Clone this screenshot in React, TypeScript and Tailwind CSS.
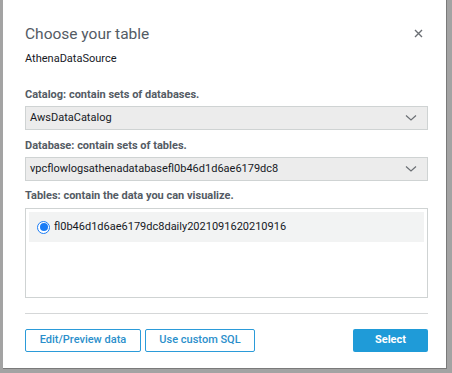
import { FC } from "react";

const Chevron: FC = () => (
  <svg width="12" height="8" viewBox="0 0 12 8" fill="none">
    <path d="M1 1.5L6 6L11 1.5" stroke="#6b6f74" strokeWidth="1.2" />
  </svg>
);

const SelectBox: FC<{ value: string }> = ({ value }) => (
  <div className="flex h-[24px] w-[403px] items-center justify-between border border-[#cfd3d3] bg-[#ececec] pl-[4px] pr-[10px] text-[11px] text-[#16191f]">
    <span>{value}</span>
    <Chevron />
  </div>
);

const Label: FC<{ text: string }> = ({ text }) => (
  <div className="text-[11px] font-bold leading-[16px] text-[#545b64]">{text}</div>
);

export default function App() {
  return (
    <div
      className="flex h-[373px] w-[452px] overflow-hidden bg-[#a3a3a3] pl-[3px]"
      style={{ fontFamily: "Roboto, 'Liberation Sans', sans-serif" }}
    >
      <div className="flex h-[369px] w-[444px] flex-col border-r border-b border-[#7a7a7a] bg-white pl-[22px]">
        <div className="mt-[22px] flex w-[403px] items-center justify-between">
          <h1 className="text-[15.5px] leading-[24px] text-[#545b64]">Choose your table</h1>
          <svg width="9" height="9" viewBox="0 0 9 9" className="mr-[5px] mb-[2px]">
            <path d="M1 1L8 8M8 1L1 8" stroke="#6b6f74" strokeWidth="1.4" />
          </svg>
        </div>
        <div className="mt-[5px] text-[11px] leading-[16px] text-[#16191f]">AthenaDataSource</div>

        <div className="mt-[20px]">
          <Label text="Catalog: contain sets of databases." />
        </div>
        <div className="mt-[3px]">
          <SelectBox value="AwsDataCatalog" />
        </div>

        <div className="mt-[8px]">
          <Label text="Database: contain sets of tables." />
        </div>
        <div className="mt-[3px]">
          <SelectBox value="vpcflowlogsathenadatabasefl0b46d1d6ae6179dc8" />
        </div>

        <div className="mt-[7px]">
          <Label text="Tables: contain the data you can visualize." />
        </div>
        <div className="mt-[4px] h-[90px] w-[403px] border border-[#cfd3d3] p-[3px]">
          <div className="flex h-[30px] items-center bg-[#f2f3f3] pl-[8px] text-[11px] text-[#16191f]">
            <span className="mr-[4px] flex h-[13px] w-[13px] items-center justify-center rounded-full border-[1.5px] border-[#1a7cf5] bg-white">
              <span className="h-[8px] w-[8px] rounded-full bg-[#1a7cf5]" />
            </span>
            fl0b46d1d6ae6179dc8daily2021091620210916
          </div>
        </div>

        <div className="mt-[15px] h-px w-[403px] bg-[#d5d7d8]" />

        <div className="mt-[15px] flex w-[403px] items-center">
          <button className="h-[23px] w-[116px] rounded-[2px] border border-[#2b9bd9] text-[11px] font-medium text-[#2b8fcb]">
            Edit/Preview data
          </button>
          <button className="ml-[4px] h-[23px] w-[110px] rounded-[2px] border border-[#2b9bd9] text-[11px] font-medium text-[#2b8fcb]">
            Use custom SQL
          </button>
          <button className="ml-auto h-[23px] w-[75px] rounded-[2px] bg-[#1f9bd8] text-[11px] font-bold text-white">
            Select
          </button>
        </div>
      </div>
    </div>
  );
}
